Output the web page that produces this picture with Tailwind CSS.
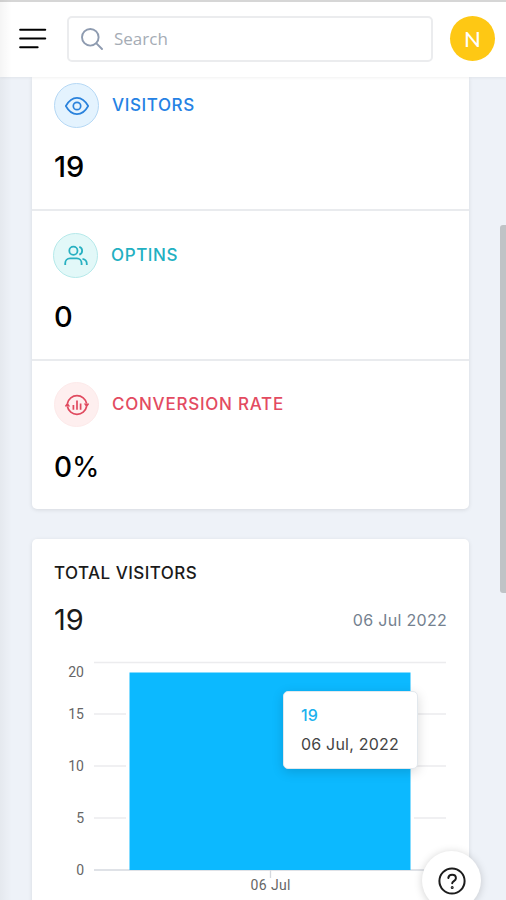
<!DOCTYPE html>
<html lang="en">
<head>
    <meta charset="UTF-8">
    <meta name="viewport" content="width=device-width, initial-scale=1.0">
    <title>Dashboard - Visitors</title>
    <script src="https://cdn.jsdelivr.net/npm/@tailwindcss/browser@4"></script>
</head>
<body class="relative h-screen overflow-hidden bg-[#eef2f8] font-[Lato,sans-serif] text-black">

    <!-- Header -->
    <header class="relative z-10 flex h-[77px] items-center border-t-2 border-[#d6d6d6] bg-white pl-[19px] pr-[11px] pb-[2px] shadow-[0_1px_3px_rgba(0,0,0,0.06)]">
        <svg class="h-[22px] w-[28px] shrink-0" viewBox="0 0 28 22" fill="none" stroke="#000" stroke-width="2.1" stroke-linecap="round">
            <path d="M1.2 1.8H26.2M1.2 10.5H26.2M1.2 19.2H18.6"/>
        </svg>
        <div class="ml-5 flex h-[46px] w-[366px] items-center rounded-[5px] border-2 border-[#ebecee] pl-[12px]">
            <svg class="h-[22px] w-[22px]" viewBox="0 0 22 22" fill="none" stroke="#8e9bb0" stroke-width="1.9" stroke-linecap="round">
                <circle cx="9.3" cy="9.3" r="8.3"/>
                <path d="M15.4 15.4L21 21"/>
            </svg>
            <span class="ml-[11px] font-['Open_Sans',sans-serif] text-[17px] text-[#a5acb5]">Search</span>
        </div>
        <div class="ml-[17px] flex h-[45px] w-[45px] shrink-0 items-center justify-center rounded-full bg-[#fec814] text-[22px] font-medium text-white">N</div>
    </header>

    <main class="ml-8 w-[437px]">
        <!-- Stats -->
        <section class="h-[432px] rounded-b-[5px] bg-white shadow-[0_1px_4px_rgba(0,0,0,0.10)]">
            <div class="h-[134px] border-b-2 border-[#e9ebee] px-[22px] pt-[6px]">
                <div class="flex items-center">
                    <div class="flex h-[45px] w-[45px] items-center justify-center rounded-full border border-[#b5d8f5] bg-[#e4f3fe]">
                        <svg class="h-6 w-6" viewBox="0 0 24 24" fill="none" stroke="#2a82dc" stroke-width="1.7" stroke-linejoin="round">
                            <path d="M.8 12C3.6 7 7.4 3.8 12 3.8S20.4 7 23.2 12C20.4 17 16.6 20.2 12 20.2S3.6 17 .8 12Z"/>
                            <circle cx="12" cy="12" r="3.7"/>
                        </svg>
                    </div>
                    <h2 class="ml-[13px] font-[Inter,sans-serif] text-[17px] font-medium tracking-[0.6px] text-[#2582e4]">VISITORS</h2>
                </div>
                <p class="mt-[21px] font-[Inter,sans-serif] text-[29px] leading-[36px] font-medium">19</p>
            </div>
            <div class="h-[150px] border-b-2 border-[#e9ebee] px-[22px] pt-[22px]">
                <div class="flex items-center">
                    <div class="-ml-px flex h-[45px] w-[45px] items-center justify-center rounded-full border border-[#b5e9ea] bg-[#e2f8f8]">
                        <svg class="h-6 w-6" viewBox="0 0 24 24" fill="none" stroke="#27b0c1" stroke-width="1.8">
                            <circle cx="9.4" cy="6.8" r="4.1"/>
                            <path d="M1.2 21V19.5C1.2 16.5 3.2 14.4 6 14.4H12.8C15.6 14.4 17.6 16.5 17.6 19.5V21"/>
                            <path d="M15.3 2.9A4.1 4.1 0 0 1 15.3 10.7"/>
                            <path d="M18.5 14.8C21.2 15.2 22.8 17.2 22.8 20V21"/>
                        </svg>
                    </div>
                    <h2 class="ml-[13px] font-[Inter,sans-serif] text-[17px] font-medium tracking-[0.6px] text-[#22b0c2]">OPTINS</h2>
                </div>
                <p class="mt-[21px] font-[Inter,sans-serif] text-[29px] leading-[36px] font-medium">0</p>
            </div>
            <div class="px-[22px] pt-[21px]">
                <div class="flex items-center">
                    <div class="flex h-[45px] w-[45px] items-center justify-center rounded-full border border-[#fdeaea] bg-[#feefef]">
                        <svg class="h-6 w-6" viewBox="0 0 24 24" fill="none" stroke="#e04a5f" stroke-width="1.7">
                            <path d="M2.4 10.5A9.8 9.8 0 0 1 21.6 10.5"/>
                            <path d="M21.6 13.5A9.8 9.8 0 0 1 2.4 13.5"/>
                            <path d="M8.4 16.8V12M12 16.8V7.6M15.6 16.8V10.4"/>
                            <path d="M-.4 13.4L2.4 9.6L5.2 13.4ZM18.8 10.6L21.6 14.4L24.4 10.6Z" fill="#e04a5f" stroke="none"/>
                        </svg>
                    </div>
                    <h2 class="ml-[13px] font-[Inter,sans-serif] text-[17px] font-medium tracking-[0.75px] text-[#e34b61]">CONVERSION RATE</h2>
                </div>
                <p class="mt-[22px] font-[Inter,sans-serif] text-[28px] leading-[36px]"><span class="font-medium">0</span>%</p>
            </div>
        </section>

        <!-- Total visitors chart -->
        <section class="mt-[30px] h-[400px] rounded-t-[5px] bg-white px-[22px] pt-[22px] shadow-[0_1px_4px_rgba(0,0,0,0.10)]">
            <h3 class="font-[Inter,sans-serif] text-[17px] leading-6 font-medium tracking-[0.45px] text-[#1a1a1a]">TOTAL VISITORS</h3>
            <div class="mt-[16px] flex h-[38px] items-center justify-between">
                <span class="font-[Inter,sans-serif] text-[29px] text-[#1a1a1a]">19</span>
                <span class="font-[Inter,sans-serif] text-[16px] tracking-[0.3px] text-[#74818f]">06 Jul 2022</span>
            </div>
            <div class="relative mt-[11px]">
                <svg class="block h-[250px] w-[393px] font-[Roboto,sans-serif] text-[14px]" viewBox="54 650 393 250">
                    <path d="M94 662.5H446M94 714H446M94 766H446M94 818H446" stroke="#ececee" stroke-width="1.3"/>
                    <path d="M94 870H446M270.5 870V878" stroke="#d5d9df" stroke-width="1.3"/>
                    <rect x="126" y="672" width="288" height="197" fill="#fff"/>
                    <rect x="129.5" y="672.5" width="281" height="197.5" fill="#0cb9ff"/>
                    <g fill="#666" text-anchor="end">
                        <text x="84" y="677">20</text>
                        <text x="84" y="719">15</text>
                        <text x="84" y="771">10</text>
                        <text x="84" y="823">5</text>
                        <text x="84" y="875">0</text>
                    </g>
                    <text x="270.5" y="890" fill="#666" text-anchor="middle" textLength="40">06 Jul</text>
                </svg>
                <!-- Tooltip -->
                <div class="absolute top-[41px] left-[229px] h-[78px] w-[135px] rounded-[5px] border border-[#e2e8ed] bg-white pt-[11px] pl-[17px] font-[Inter,sans-serif] text-[16px] shadow-[0_3px_12px_rgba(0,0,0,0.15)]">
                    <p class="leading-[24px] font-medium text-[#1db2ee]">19</p>
                    <p class="mt-[5px] leading-[24px] tracking-[0.2px] text-[#444]">06 Jul, 2022</p>
                </div>
            </div>
        </section>
    </main>

    <!-- Edge shade -->
    <div class="absolute top-0 left-0 z-20 h-full w-[12px] bg-linear-to-r from-black/4 to-transparent"></div>

    <!-- Scrollbar -->
    <div class="absolute top-[225px] right-0 h-[368px] w-[6px] rounded-l-[3px] bg-[#bfc3c6]"></div>

    <!-- Help button -->
    <button class="absolute top-[851px] left-[422px] flex h-[59px] w-[59px] items-center justify-center rounded-full bg-white shadow-[0_1px_8px_rgba(0,0,0,0.18)]">
        <svg class="h-7 w-7" viewBox="0 0 28 28" fill="none" stroke="#1c1c1c" stroke-width="2" stroke-linecap="round" stroke-linejoin="round">
            <circle cx="14" cy="14" r="12.6"/>
            <path d="M10.3 11C10.6 8.9 12.1 7.8 14.1 7.8C16.3 7.8 17.9 9.2 17.9 11.2C17.9 14 14.2 14.2 14.2 16.3"/>
            <circle cx="14.2" cy="20.4" r=".5" fill="#1c1c1c"/>
        </svg>
    </button>
</body>
</html>
